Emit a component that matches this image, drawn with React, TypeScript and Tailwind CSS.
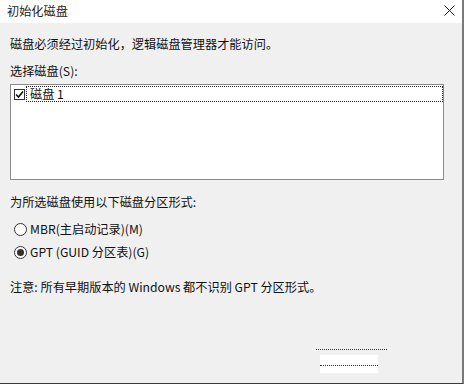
import React from 'react';

const FONT = "font-['Noto_Sans_CJK_SC','Noto_Sans',sans-serif]";

function CloseIcon() {
  return (
    <svg width="11" height="11" viewBox="0 0 11 11" className="block">
      <path d="M0.5 0.5 L10.5 10.5 M10.5 0.5 L0.5 10.5" stroke="#1a1a1a" strokeWidth="1" fill="none" />
    </svg>
  );
}

function CheckBox() {
  return (
    <div className="w-[11px] h-[11px] border border-[#333] bg-white flex items-center justify-center shrink-0">
      <svg width="9" height="9" viewBox="0 0 9 9" className="block">
        <path d="M1 4.5 L3.5 7 L8 1.5" stroke="#111" strokeWidth="1.6" fill="none" />
      </svg>
    </div>
  );
}

function Radio({ checked }: { checked?: boolean }) {
  return (
    <div className="w-[13px] h-[13px] rounded-full border border-[#333] bg-white flex items-center justify-center shrink-0">
      {checked && <div className="w-[7px] h-[7px] rounded-full bg-[#333]" />}
    </div>
  );
}

export default function App() {
  return (
    <div className={`w-[464px] h-[384px] flex flex-col bg-[#f0f0f0] border-r-2 border-b border-r-[#7a7a7a] border-b-[#3a3a3a] text-[12.2px] text-[#111] ${FONT}`}>
      {/* title bar */}
      <div className="h-[23px] bg-white flex items-center justify-between pl-[7px] pr-[7px] shrink-0">
        <span className="leading-[16px] text-[#222] -mt-[2px]">初始化磁盘</span>
        <div className="-mt-[3px]">
          <CloseIcon />
        </div>
      </div>

      {/* body */}
      <div className="flex flex-col pl-[10px] pt-[13px] flex-1">
        <p className="leading-[16px]">磁盘必须经过初始化，逻辑磁盘管理器才能访问。</p>
        <p className="leading-[16px] mt-[11px]">选择磁盘(S):</p>

        <div className="mt-[5px] w-[434px] h-[96px] bg-white border border-[#8a8a8a] flex flex-col pt-[1px] pl-[2px]">
          <div className="flex items-center h-[16px]">
            <div className="ml-[1px]">
              <CheckBox />
            </div>
            <div className="ml-[1px] flex-1 h-[16px] border border-dotted border-[#222] flex items-center pl-[3px]">
              <span className="leading-[14px]">磁盘 1</span>
            </div>
          </div>
        </div>

        <p className="leading-[16px] mt-[14px]">为所选磁盘使用以下磁盘分区形式:</p>

        <div className="flex items-center gap-[3px] mt-[11px] pl-[4px] h-[16px]">
          <Radio />
          <span className="leading-[16px]">MBR(主启动记录)(M)</span>
        </div>
        <div className="flex items-center gap-[3px] mt-[7px] pl-[4px] h-[16px]">
          <Radio checked />
          <span className="leading-[16px]">GPT (GUID 分区表)(G)</span>
        </div>

        <p className="leading-[16px] mt-[19px]">注意: 所有早期版本的 Windows 都不识别 GPT 分区形式。</p>

        {/* leftover button traces */}
        <div className="flex flex-col mt-[54px] ml-[306px]">
          <div className="w-[71px] border-t border-dotted border-[#333]" />
          <div className="ml-[4px] w-[58px] h-[18px] bg-white mt-[5px] flex flex-col">
            <div className="border-t border-dotted border-[#333] mt-[10px]" />
          </div>
        </div>
      </div>
    </div>
  );
}
